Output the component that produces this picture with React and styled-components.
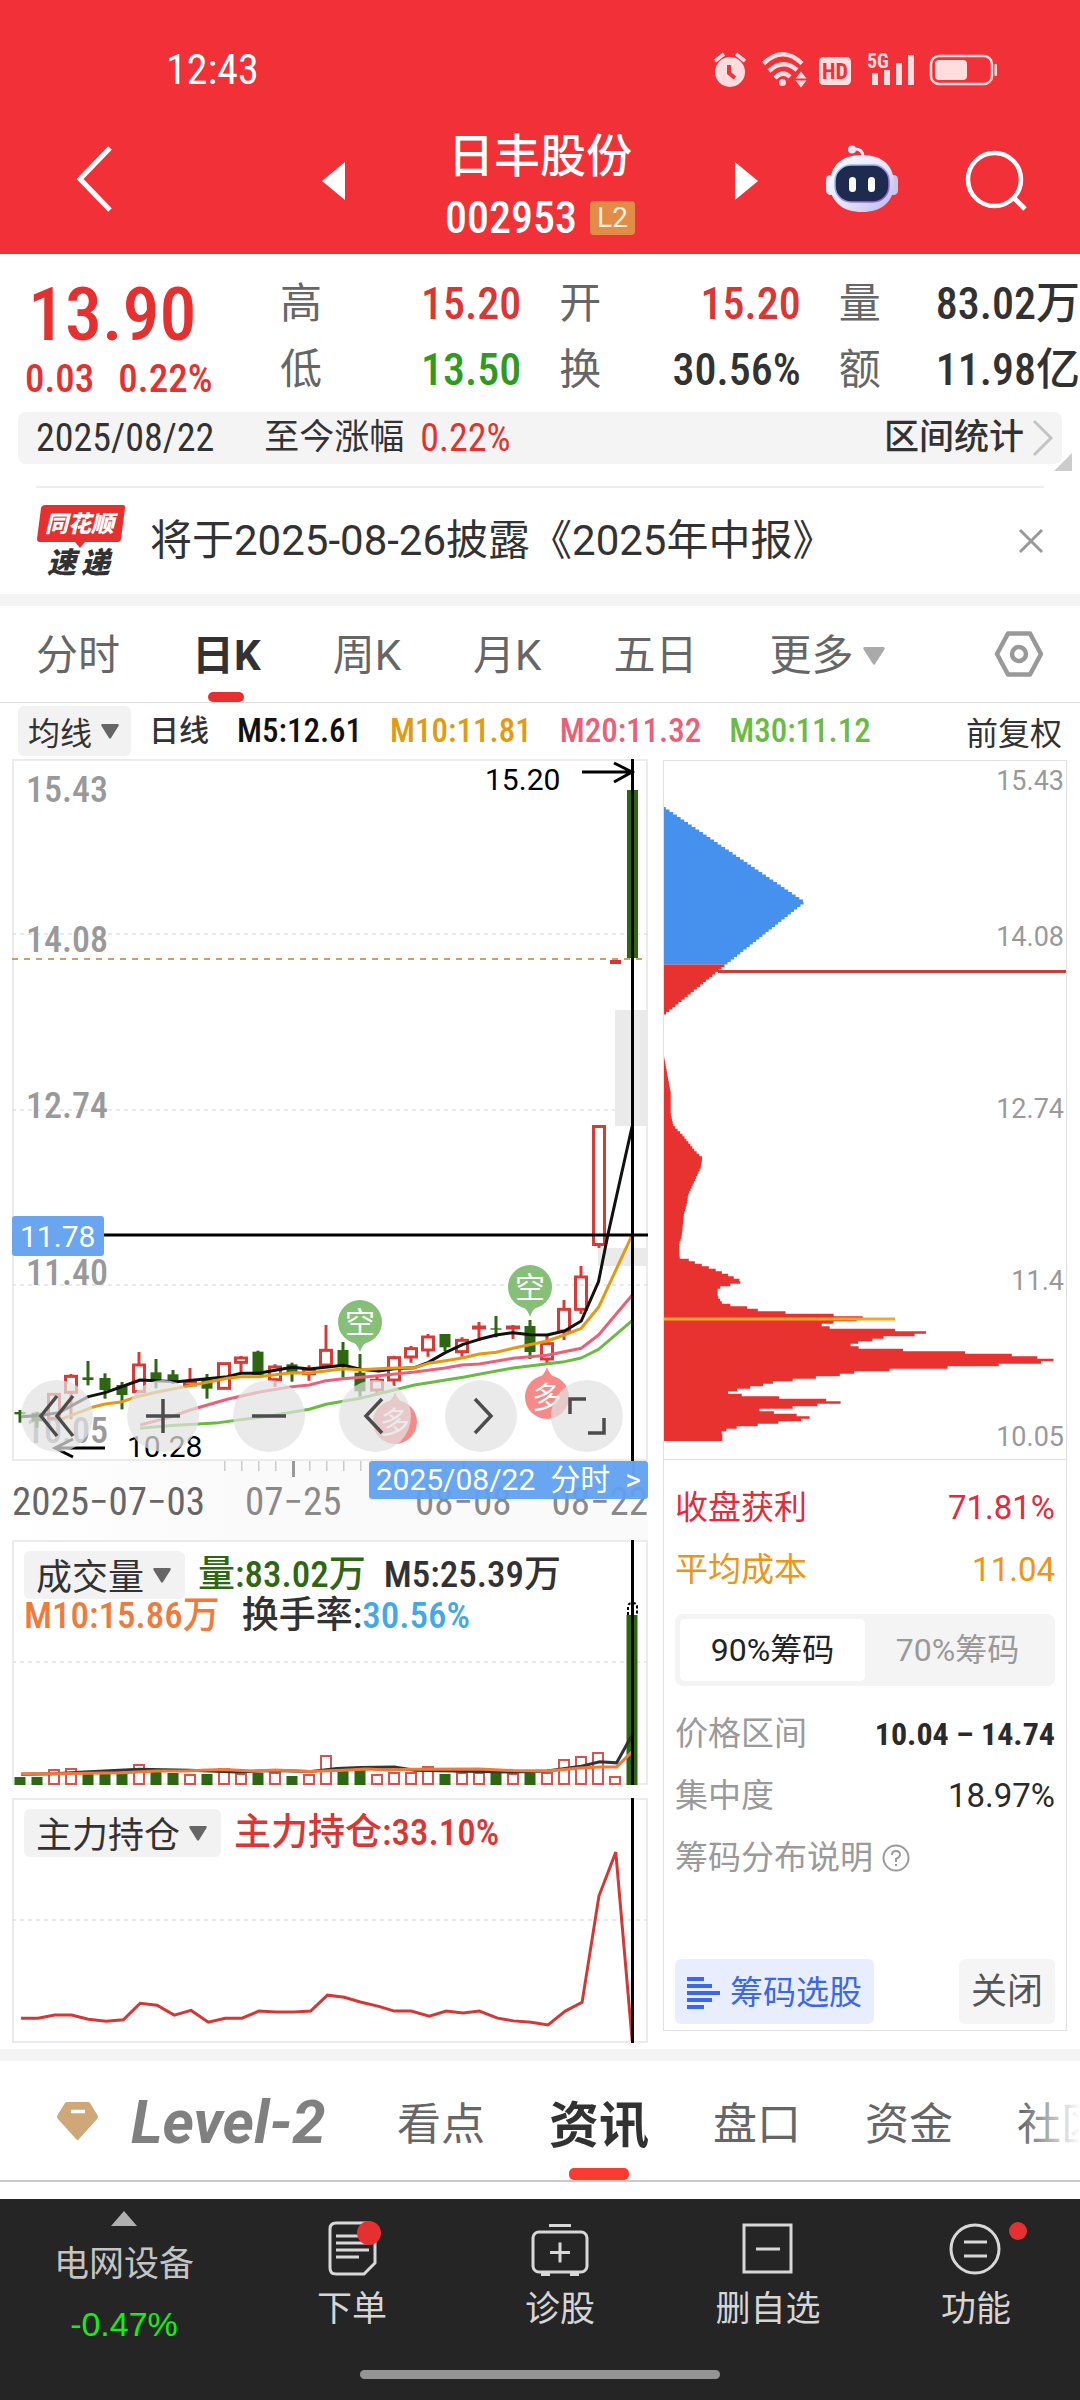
import React from "react";
import styled, { createGlobalStyle } from "styled-components";

const CJK = '"Noto Sans CJK SC", sans-serif';
const NARROW = `"Roboto Condensed", "Liberation Sans Narrow", Roboto, ${CJK}`;
const RED = "#e63030";
const GREEN = "#2f6613";

const Global = createGlobalStyle`
  * { box-sizing: border-box; }
  body { margin: 0; background: #fff; font-family: Roboto, ${CJK}; color: #323232; }
  button, select { font-family: inherit; border: 0; background: none; padding: 0; margin: 0; color: inherit; white-space: nowrap; }
  a { color: inherit; text-decoration: none; }
  svg { display: block; flex: none; overflow: visible; }
`;

const Page = styled.div`
  width: 100%;
  overflow: hidden;
`;

/* ---------- header ---------- */
const Header = styled.header`
  background: #f23038;
  color: #fff;
  padding-bottom: 8px;
`;
const StatusBar = styled.div`
  display: flex;
  align-items: center;
  justify-content: space-between;
  padding: 44px 82px 0 166px;
  font-family: ${NARROW};
  font-size: 42px;
  line-height: 52px;
`;
const StatusIcons = styled.div`
  display: flex;
  align-items: center;
`;
const TitleBar = styled.div`
  display: grid;
  grid-template-columns: minmax(0, 1fr) 390px minmax(0, 1fr);
  align-items: center;
  padding-top: 20px;
`;
const TitleSide = styled.div`
  display: flex;
  align-items: center;
  justify-content: space-between;
  padding-left: ${(p) => p.$left || 0}px;
  padding-right: ${(p) => p.$right || 0}px;
`;
const IconButton = styled.button`
  display: block;
`;
const TitleBlock = styled.div`
  display: flex;
  flex-direction: column;
  align-items: center;
  gap: 4px;
  padding-top: 10px;
`;
const StockName = styled.h1`
  margin: 0;
  font-size: 46px;
  line-height: 60px;
  font-weight: 500;
`;
const CodeLine = styled.div`
  display: flex;
  align-items: center;
  gap: 13px;
  font-family: ${NARROW};
  font-size: 44px;
  line-height: 56px;
  font-weight: 500;
`;
const Badge = styled.span`
  background: #e28c48;
  border-radius: 4px;
  color: #fff3df;
  font-family: Roboto, sans-serif;
  font-size: 28px;
  line-height: 34px;
  font-weight: 400;
  padding: 0 7px;
`;

/* ---------- quote ---------- */
const Quote = styled.section`
  display: flex;
  padding: 17px 0 9px;
`;
const PriceBox = styled.div`
  width: 280px;
  padding-left: 25px;
  color: ${RED};
  font-family: ${NARROW};
`;
const Price = styled.div`
  padding-left: 3px;
  font-size: 74px;
  line-height: 88px;
  font-weight: 500;
`;
const Change = styled.div`
  display: flex;
  gap: 24px;
  font-size: 39px;
  line-height: 40px;
  font-weight: 500;
`;
const Stats = styled.dl`
  flex: 1;
  margin: 0;
  display: grid;
  grid-template-columns: repeat(3, 1fr);
  grid-auto-rows: 66px;
  column-gap: 38px;
`;
const Stat = styled.div`
  display: flex;
  justify-content: space-between;
  line-height: 66px;
  dt { color: #666; font-size: 42px; }
  dd { margin: 0; font-family: ${NARROW}; font-size: 44px; font-weight: 500; white-space: nowrap; color: ${(p) => p.$color || "#323232"}; }
`;
const RangeBar = styled.div`
  position: relative;
  display: flex;
  align-items: center;
  margin: 0 18px 22px;
  padding: 0 9px 0 18px;
  background: #f4f4f4;
  border-radius: 8px;
  font-size: 35px;
  line-height: 52px;
`;
const RangeDate = styled.time`
  margin-right: 50px;
  font-family: ${NARROW};
  font-size: 38px;
`;
const RangeValue = styled.span`
  color: ${RED};
  font-family: ${NARROW};
  font-size: 38px;
  margin-left: 16px;
`;
const RangeLink = styled.button`
  display: flex;
  align-items: center;
  gap: 9px;
  margin-left: auto;
  font-size: 35px;
  line-height: 52px;
  font-weight: 500;
`;
const Corner = styled.i`
  position: absolute;
  right: -10px;
  bottom: -7px;
  border-left: 18px solid transparent;
  border-bottom: 18px solid #ccc;
`;
const News = styled.div`
  display: flex;
  align-items: center;
  margin: 0 36px;
  border-top: 2px solid #ededed;
  height: 108px;
  a { margin-left: 24px; flex: 1; font-size: 42px; line-height: 60px; white-space: nowrap; }
`;
const Band = styled.div`
  height: 12px;
  background: #f4f4f4;
`;

/* ---------- period tabs ---------- */
const PeriodTabs = styled.nav`
  display: flex;
  align-items: stretch;
  gap: 72px;
  padding: 0 36px;
  height: 97px;
  border-bottom: 1px solid #dedede;
`;
const PeriodTab = styled.button`
  position: relative;
  display: flex;
  align-items: center;
  gap: 10px;
  padding-top: 3px;
  font-size: 42px;
  line-height: 60px;
  color: ${(p) => (p.$active ? "#323232" : "#666")};
  font-weight: ${(p) => (p.$active ? 700 : 400)};
  &:last-child { margin-left: auto; padding-top: 0; }
`;
const Underline = styled.i`
  position: absolute;
  left: 50%;
  bottom: 0;
  width: ${(p) => p.$w}px;
  height: ${(p) => p.$h}px;
  margin-left: ${(p) => -p.$w / 2}px;
  border-radius: 5px;
  background: ${(p) => p.$color};
`;
const AverageRow = styled.div`
  display: flex;
  align-items: center;
  gap: 18px;
  padding: 3px 18px;
  font-size: 32px;
  line-height: 50px;
  font-weight: 500;
`;
const Average = styled.span`
  color: ${(p) => p.$color};
  margin-right: 10px;
  font-family: ${NARROW};
  font-size: ${(p) => p.$size || 33}px;
  white-space: nowrap;
`;
const Adjust = styled.button`
  margin-left: auto;
  font-size: 32px;
`;
const DropBox = styled.label`
  position: relative;
  display: flex;
  align-items: center;
  background: #f2f2f2;
  border-radius: 6px;
  svg { position: absolute; right: ${(p) => p.$pad}px; pointer-events: none; }
  select {
    appearance: none;
    font-size: ${(p) => p.$size}px;
    line-height: ${(p) => p.$h}px;
    height: ${(p) => p.$h}px;
    padding: 3px ${(p) => p.$pad + 26}px 0 ${(p) => p.$pad - 2}px;
    font-weight: 400;
  }
`;

/* ---------- charts ---------- */
const Charts = styled.section`
  display: grid;
  grid-template-columns: 636fr 404fr;
  column-gap: 15px;
  align-items: start;
  padding: 0 13px 6px 12px;
`;
const Column = styled.div`
  min-width: 0;
`;
const KPanel = styled.div`
  position: relative;
  > svg { width: 100%; height: auto; }
`;
const Tools = styled.div`
  position: absolute;
  left: 9px;
  right: 25px;
  bottom: 9px;
  display: flex;
  justify-content: space-between;
`;
const Tool = styled.button`
  width: 72px;
  height: 72px;
  border-radius: 50%;
  background: rgba(226, 226, 226, 0.72);
  display: flex;
  align-items: center;
  justify-content: center;
`;
const Axis = styled.div`
  position: relative;
  height: 79px;
  background: linear-gradient(90deg, #fff, #fafafa 35%);
`;
const AxisTicks = styled.svg`
  width: 100%;
  height: auto;
`;
const AxisDates = styled.div`
  display: grid;
  grid-template-columns: 233fr 170fr 133fr 100fr;
  padding-top: 5px;
  font-family: ${NARROW};
  font-size: 39px;
  line-height: 36px;
  color: #8a8a8a;
  white-space: nowrap;
  time:first-child { color: #666; }
  time:last-child { text-align: right; }
`;
const DateTag = styled.button`
  position: absolute;
  top: 0;
  right: 0;
  display: flex;
  gap: 15px;
  padding: 0 7px;
  background: rgba(96, 160, 240, 0.94);
  border-radius: 3px;
  color: #fff;
  font-size: 30px;
  line-height: 38px;
`;
const SubPanel = styled.div`
  position: relative;
  margin-bottom: 13px;
  &:last-child { margin-bottom: 0; }
  > svg { width: 100%; height: auto; }
`;
const Legend = styled.div`
  position: absolute;
  top: 11px;
  left: 12px;
  right: 12px;
`;
const LegendRow = styled.div`
  display: flex;
  align-items: center;
  gap: ${(p) => p.$gap}px;
  font-family: ${NARROW};
  font-size: 37px;
  line-height: ${(p) => p.$h}px;
  font-weight: 500;
  white-space: nowrap;
`;
const LegendGroup = styled.span`
  display: flex;
  gap: 18px;
`;
const Tint = styled.span`
  color: ${(p) => p.$color};
`;

/* ---------- chip distribution ---------- */
const ChipPanel = styled.aside`
  margin-top: 1px;
  border: 1px solid #e0e0e0;
  > svg { width: 100%; height: auto; }
`;
const ChipBody = styled.div`
  border-top: 1px solid #e0e0e0;
  padding: 17px 11px 6px;
`;
const ChipRow = styled.div`
  display: flex;
  justify-content: space-between;
  align-items: center;
  font-size: 33px;
  line-height: 62px;
  white-space: nowrap;
  color: ${(p) => p.$color || "#2a2a2a"};
  span:first-child { color: ${(p) => p.$color || "#9a9a9a"}; }
`;
const Range = styled.b`
  font-family: ${NARROW};
  font-weight: 700;
  font-size: 32px;
`;
const Segment = styled.div`
  display: grid;
  grid-template-columns: 1fr 1fr;
  margin: 13px 0 17px;
  padding: 5px;
  background: #f4f4f4;
  border-radius: 8px;
`;
const SegmentButton = styled.button`
  border-radius: 5px;
  font-size: 32px;
  line-height: 62px;
  background: ${(p) => (p.$on ? "#fff" : "transparent")};
  color: ${(p) => (p.$on ? "#222" : "#999")};
`;
const HelpButton = styled.button`
  display: flex;
  align-items: center;
  gap: 9px;
  color: #9a9a9a;
  font-size: 33px;
  line-height: 62px;
`;
const ChipActions = styled.div`
  display: flex;
  justify-content: space-between;
  margin-top: 70px;
`;
const ActionButton = styled.button`
  display: flex;
  align-items: center;
  gap: 10px;
  padding: 2px 12px 0;
  border-radius: 6px;
  line-height: 63px;
  font-size: ${(p) => p.$size}px;
  background: ${(p) => p.$bg};
  color: ${(p) => p.$color};
`;

/* ---------- bottom ---------- */
const InfoTabs = styled.nav`
  position: relative;
  display: flex;
  gap: 64px;
  height: 121px;
  padding-left: 57px;
  margin-bottom: 17px;
  border-bottom: 2px solid #cacaca;
  overflow: hidden;
  &::after {
    content: "";
    position: absolute;
    right: 0; top: 0; bottom: 0;
    width: 60px;
    background: linear-gradient(90deg, rgba(255,255,255,0), #fff);
  }
`;
const InfoTab = styled.button`
  position: relative;
  flex: none;
  display: flex;
  align-items: center;
  gap: 33px;
  font-size: ${(p) => (p.$active ? 50 : 44)}px;
  font-weight: ${(p) => (p.$active ? 700 : 400)};
  color: ${(p) => (p.$active ? "#323232" : "#666")};
`;
const LevelMark = styled.span`
  min-width: 202px;
  padding-top: 4px;
  text-align: left;
  font-family: Roboto, sans-serif;
  font-size: 60px;
  font-weight: 700;
  font-style: italic;
  color: #808080;
`;
const BottomNav = styled.nav`
  background: #252525;
  color: #d6d6d6;
`;
const NavItems = styled.div`
  display: grid;
  grid-template-columns: 248fr repeat(4, 208fr);
`;
const NavItem = styled.a`
  display: flex;
  flex-direction: column;
  align-items: center;
  padding-top: 20px;
  font-size: 35px;
  line-height: 52px;
  svg { margin-bottom: 5px; }
`;
const IndexItem = styled(NavItem)`
  padding-top: 12px;
  color: #c4c4c4;
  svg { margin-bottom: 13px; }
`;
const IndexChange = styled.span`
  margin-top: 7px;
  font-size: 34px;
  line-height: 52px;
  font-family: "Liberation Sans", sans-serif;
  color: #14f014;
`;
const HomeBar = styled.div`
  width: 360px;
  height: 9px;
  border-radius: 5px;
  background: #949494;
  margin: 20px auto 0;
`;
const NavFoot = styled.div`
  height: 21px;
`;

/* ---------- small drawings ---------- */
const Caret = ({ color = "#666", w = 18, h = 15 }) => (
  <svg width={w} height={h} viewBox="0 0 18 15" preserveAspectRatio="none" aria-hidden="true">
    <path d="M1 0H17Q18.500 .5 17.500 2L10 14Q9 15.500 8 14L.5 2Q-.5 .5 1 0Z" fill={color} />
  </svg>
);

const Dropdown = ({ label, value, size, h, pad }) => (
  <DropBox $size={size} $h={h} $pad={pad}>
    <select aria-label={label} defaultValue={value}>
      <option>{value}</option>
    </select>
    <Caret />
  </DropBox>
);

const StatusGlyphs = () => (
  <svg width="286" height="38" viewBox="712 50 286 38" fill="#ffdcdd" aria-hidden="true">
    <circle cx="730" cy="71" r="15" />
    <path d="M715 60l9-7M745 60l-9-7" stroke="#ffdcdd" strokeWidth="3.500" />
    <path d="M729 64v8l6 5" stroke="#f23038" strokeWidth="4" fill="none" />
    <g fill="none" stroke="#ffdcdd" strokeWidth="4.500">
      <path d="M763.500 62.500Q783 44 802 62.500" />
      <path d="M769 70Q783 57 797 69" />
      <path d="M775 77Q783 69 790 76" />
    </g>
    <circle cx="782.500" cy="81.500" r="3.500" />
    <path d="M795.500 77.500h11l-5.500-7zM795.500 79.500h11l-5.500 7z" />
    <rect x="819" y="56" width="32" height="28" rx="4.500" />
    <text x="835" y="78" textAnchor="middle" fontFamily="Roboto Condensed, Roboto" fontSize="22" fontWeight="700" fill="#f23038">HD</text>
    <text x="867" y="67" fontFamily="Roboto Condensed, Roboto" fontSize="20" fontWeight="700">5G</text>
    <path d="M872 72h6v12h-6zM884 69h6v15h-6zM896 62h6v22h-6zM908 54h6v30h-6z" />
    <rect x="931" y="55" width="61" height="28" rx="8" fill="none" stroke="#ffdcdd" strokeWidth="2.500" />
    <rect x="935" y="59" width="32" height="20" rx="4" />
    <rect x="994.500" y="63" width="2.500" height="12" rx="1" />
  </svg>
);

const Robot = () => (
  <svg width="74" height="72" viewBox="0 0 74 72" aria-hidden="true">
    <defs>
      <linearGradient id="shell" x1="0" y1="0" x2="1" y2="1">
        <stop offset="0" stopColor="#fff" />
        <stop offset=".55" stopColor="#e6e4f8" />
        <stop offset="1" stopColor="#b9b5ea" />
      </linearGradient>
      <linearGradient id="rim" x1="0" y1="0" x2="1" y2="1">
        <stop offset="0" stopColor="#8fdcf0" />
        <stop offset="1" stopColor="#9a4be6" />
      </linearGradient>
    </defs>
    <path d="M28 4Q38 3 38 12" fill="none" stroke="#f0effb" strokeWidth="3" />
    <circle cx="27" cy="4.500" r="4" fill="#e8e6fa" />
    <rect x="1" y="30" width="9" height="20" rx="4.500" fill="#eeecfc" />
    <rect x="64" y="30" width="9" height="20" rx="4.500" fill="#c9c6f0" />
    <path d="M37 10C58 10 69 21 69 39C69 57 56 67 37 67S5 57 5 39C5 21 16 10 37 10Z" fill="url(#shell)" />
    <rect x="10" y="20" width="54" height="37" rx="16" fill="#1f2a4f" stroke="url(#rim)" strokeWidth="1.500" />
    <rect x="24" y="32" width="7" height="15" rx="3.500" fill="#fff" />
    <rect x="43" y="32" width="7" height="15" rx="3.500" fill="#fff" />
  </svg>
);

const NewsMark = () => (
  <svg width="90" height="76" viewBox="36 502 90 76" role="img" aria-label="同花顺速递">
    <path d="M45 504H123Q125.500 504 125 507L121 538Q120.500 541 118 541H85L80 547L75 541H40Q37 541 37 538L41 507Q42 504 45 504Z" fill={RED} />
    <g fontFamily="Noto Sans CJK SC" fontWeight="900" fontStyle="italic">
      <text x="45" y="531" fontSize="23" fill="#fff">同花顺</text>
      <text x="47" y="572" fontSize="29" fill="#323232">速</text>
      <text x="81" y="572" fontSize="29" fill="#323232">递</text>
    </g>
  </svg>
);

/* ---------- K line chart ---------- */
const slot = (i) => 20 + 17 * i;

// [up, bodyTop, bodyBottom, high, low], one entry per trading day, in thirds of a pixel below the plot's mid line
const DAYS = [
  [0, 846, 853, 840, 878], [0, 848, 874, 845, 893], [1, 790, 868, 790, 868], [1, 736, 790, 732, 868],
  [0, 742, 750, 693, 766], [0, 744, 780, 730, 806], [0, 765, 795, 756, 838], [1, 702, 788, 666, 788],
  [0, 727, 750, 687, 775], [0, 733, 753, 720, 762], [1, 752, 768, 714, 768], [0, 750, 776, 732, 806],
  [1, 698, 778, 698, 778], [1, 681, 700, 678, 727], [0, 665, 735, 662, 735], [1, 708, 752, 703, 770],
  [0, 703, 728, 698, 755], [1, 716, 734, 706, 752], [1, 658, 708, 585, 708], [0, 660, 706, 636, 743],
  [0, 728, 784, 672, 800], [1, 748, 783, 735, 790], [1, 680, 753, 677, 768], [1, 653, 684, 648, 698],
  [1, 618, 663, 612, 680], [0, 612, 652, 612, 663], [1, 628, 668, 622, 680], [1, 588, 593, 576, 633],
  [0, 595, 599, 558, 622], [1, 588, 595, 585, 627], [0, 588, 666, 570, 687], [1, 638, 690, 618, 703],
  [1, 535, 606, 510, 630], [1, 438, 541, 408, 552],
];
const LINES = [
  ["#6abb43", "333,895 400,887 520,878 640,858 735,838 775,823 856,805 985,765 1100,742 1219,714 1341,695 1381,684 1422,658 1502,572"],
  ["#ea6078", "333,885 400,863 452,840 540,808 614,787 694,770 735,765 775,752 816,746 900,737 985,726 1058,714 1098,705 1139,702 1219,685 1300,676 1381,655 1422,615 1502,495"],
  ["#111", "50,860 100,856 140,848 210,800 250,788 333,750 420,755 540,740 573,730 614,730 694,712 735,717 816,706 856,718 900,723 937,716 985,713 1018,697 1058,668 1100,643 1139,628 1179,615 1219,608 1260,614 1300,615 1341,603 1381,573 1422,455 1445,310 1502,-12"],
  ["#e39a10", "145,868 219,832 250,822 291,815 320,802 371,787 440,770 540,745 573,740 614,740 694,728 735,729 816,716 856,719 920,715 985,713 1018,700 1058,692 1098,684 1139,672 1179,667 1219,655 1300,633 1341,615 1381,595 1422,532 1502,315"],
];
const PRICES = [["15.43", 802], ["14.08", 952], ["12.74", 1118], ["11.40", 1285], ["10.05", 1443]];

const Candle = ({ x, day: [up, top, bottom, high, low] }) => {
  const y = (v) => 1130 + v / 3;
  if (up)
    return (
      <g stroke="#d83a38" strokeWidth="3" fill="none">
        <path d={`M${x} ${y(high)}V${y(top)}M${x} ${y(bottom)}V${y(low)}`} />
        <rect x={x - 5.5} y={y(top) + 1} width="11" height={Math.max(1, (bottom - top) / 3 - 2)} />
      </g>
    );
  return (
    <g fill={GREEN}>
      <rect x={x - 1.5} y={y(high)} width="3" height={(low - high) / 3} />
      <rect x={x - 5.5} y={y(top)} width="11" height={(bottom - top) / 3} />
    </g>
  );
};

const Balloon = ({ x, y, up, children }) => (
  <g>
    <path
      d={up ? `M${x - 12} ${y - 16}Q${x - 2} ${y - 22} ${x} ${y - 30}Q${x + 2} ${y - 22} ${x + 12} ${y - 16}Z` : `M${x - 12} ${y + 16}Q${x - 2} ${y + 22} ${x} ${y + 30}Q${x + 2} ${y + 22} ${x + 12} ${y + 16}Z`}
      fill={up ? "#f58a88" : "#86bf77"}
    />
    <circle cx={x} cy={y} r="22" fill={up ? "#f58a88" : "#86bf77"} />
    <text x={x} y={y + 11} textAnchor="middle" fontSize="30" fill="#fff" fontFamily="Noto Sans CJK SC">{children}</text>
  </g>
);

const KChart = () => (
  <svg viewBox="12 759 636 702" fontFamily="Roboto" role="img" aria-label="日K线">
    <rect x="13" y="760" width="634" height="700" fill="#fff" stroke="#ebebeb" strokeWidth="2" />
    <path d="M12 934H648M12 1110H648M12 1285H648" stroke="#e2e2e2" strokeWidth="1.500" strokeDasharray="4 4" />
    <path d="M12 959H642" stroke="#c5a46d" strokeWidth="2" strokeDasharray="6 6" />
    <path d="M615 1010H648V1126H615ZM598 1248H648V1266H598Z" fill="#eaeaea" />
    {PRICES.map(([t, y]) => (
      <text key={t} x="26" y={y} fontFamily="Roboto Condensed, Roboto" fontSize="36" fontWeight="500" fill="#999">{t}</text>
    ))}
    {DAYS.map((d, i) => <Candle key={i} x={slot(i)} day={d} />)}
    <path d="M593.500 1126.500h11v118h-11zM599 1245v3" fill="none" stroke="#d83a38" strokeWidth="3" />
    <path d="M610 960h11v4h-11z" fill={RED} />
    <path d="M627 790h11v168h-11z" fill={GREEN} />
    <g transform="translate(0 1130) scale(.4209 .3333)" fill="none" strokeWidth="3" strokeLinejoin="round">
      {LINES.map(([c, p]) => <polyline key={c} points={p} stroke={c} vectorEffect="non-scaling-stroke" />)}
    </g>
    <Balloon x={360} y={1322}>空</Balloon>
    <Balloon x={530} y={1287}>空</Balloon>
    <Balloon x={395} y={1422} up>多</Balloon>
    <Balloon x={547} y={1397} up>多</Balloon>
    <text x="485" y="790" fontSize="30" fill="#000">15.20</text>
    <text x="127" y="1457" fontSize="30" fill="#000">10.28</text>
    <g fill="none" stroke="#000" strokeWidth="3">
      <path d="M582 772H632M614 763L632 772L614 782" />
      <path d="M105 1448H55M73 1439L55 1448L73 1457" />
      <path d="M632.500 759V1461M104 1235H648" />
    </g>
    <rect x="12" y="1216" width="92" height="40" rx="3" fill="#6aa5f0" />
    <text x="20" y="1247" fontSize="30" fill="#fff">11.78</text>
  </svg>
);

const TOOLS = [
  ["最早", "M16 -20L0 0L16 20M0 -20L-16 0L0 20"],
  ["放大", "M-17 0H17M0 -17V17"],
  ["缩小", "M-17 0H17"],
  ["左移", "M7 -17L-9 0L7 17"],
  ["右移", "M-6 -17L10 0L-6 17"],
  ["全屏", "M-17 -2V-17H-1M17 2V17H1"],
];

/* ---------- volume and position charts ---------- */
const VOLUMES = [
  [0, 8], [0, 8], [1, 15], [1, 16], [0, 11], [0, 11], [0, 11], [1, 20], [0, 13], [0, 12], [1, 10], [0, 11], [1, 16],
  [1, 11], [0, 12], [1, 12], [0, 9], [1, 10], [1, 29], [0, 18], [0, 15], [1, 10], [1, 12], [1, 12], [1, 18], [0, 11],
  [1, 12], [1, 12], [0, 12], [1, 11], [0, 12], [1, 12], [1, 25], [1, 28], [1, 32], [1, 8], [0, 170],
];
const VOLUME_LINES = [
  ["#333", "50,752 130,750 200,745 331,737 450,740 560,745 654,741 735,744 800,735 856,732 937,730 985,740 1139,744 1219,745 1300,742 1381,728 1425,715 1465,718 1502,635"],
  ["#f07a3c", "50,750 130,750 291,747 371,742 440,742 492,739 533,738 600,742 654,739 735,744 816,740 870,736 920,739 977,737 1139,736 1219,741 1300,742 1381,733 1425,730 1465,730 1502,685"],
];
const POSITION = "50,1473 90,1473 130,1464 170,1464 210,1476 252,1482 293,1478 333,1429 373,1435 414,1464 454,1450 495,1485 535,1473 575,1473 615,1452 655,1455 700,1455 738,1452 778,1405 818,1411 856,1425 900,1438 937,1452 977,1452 1020,1467 1060,1452 1100,1458 1139,1452 1182,1473 1220,1481 1262,1485 1302,1493 1343,1452 1383,1426 1423,1112 1463,982 1502,1540";

const VolumeChart = () => (
  <svg viewBox="12 1540 636 245" role="img" aria-label="成交量">
    <rect x="13" y="1541" width="634" height="243" fill="#fff" stroke="#ebebeb" strokeWidth="2" />
    <path d="M12 1662H648" stroke="#e8e8e8" strokeWidth="2" strokeDasharray="4 4" />
    {VOLUMES.map(([up, h], i) =>
      up ? (
        <rect key={i} x={slot(i) - 5} y={1785 - h} width="10" height={h - 1} fill="#fff" stroke="#d65350" strokeWidth="2" />
      ) : (
        <rect key={i} x={slot(i) - 5.5} y={1785 - h} width="11" height={h} fill={GREEN} />
      )
    )}
    <g transform="translate(0 1520) scale(.4209 .3382)" fill="none" strokeWidth="3">
      {VOLUME_LINES.map(([c, p]) => <polyline key={c} points={p} stroke={c} vectorEffect="non-scaling-stroke" />)}
    </g>
    <path d="M632.500 1540V1785" stroke="#000" strokeWidth="3" />
    <path d="M628 1615V1607Q628 1603 632.500 1603T637 1607V1615" fill="none" stroke="#000" strokeWidth="2" strokeDasharray="3 2" />
  </svg>
);

const PositionChart = () => (
  <svg viewBox="12 1798 636 245" role="img" aria-label="主力持仓">
    <rect x="13" y="1799" width="634" height="243" fill="#fff" stroke="#ebebeb" strokeWidth="2" />
    <path d="M12 1920H648" stroke="#e8e8e8" strokeWidth="2" strokeDasharray="4 4" />
    <g transform="translate(0 1520) scale(.4209 .3382)" fill="none">
      <polyline points={POSITION} stroke="#d23835" strokeWidth="3" vectorEffect="non-scaling-stroke" />
    </g>
    <path d="M632.500 1798V2043" stroke="#000" strokeWidth="3" />
  </svg>
);

/* ---------- chip distribution chart ---------- */
const PROFILE = [
  [42, 667], [62, 745], [62, 790], [70, 818], [97, 838], [135, 873], [157, 888], [152, 910], [115, 968], [110, 990],
  [102, 1010], [95, 1060], [88, 1075], [88, 1105], [108, 1108], [130, 1115], [192, 1131], [230, 1142], [280, 1158],
  [225, 1168], [203, 1172], [203, 1190], [215, 1203], [232, 1208], [285, 1212], [300, 1217], [346, 1222], [467, 1228],
  [638, 1233], [638, 1240], [570, 1245], [515, 1250], [515, 1257], [622, 1260], [804, 1265], [845, 1271], [743, 1277], [657, 1282],
  [674, 1287], [585, 1293], [615, 1298], [635, 1304], [820, 1308], [972, 1313], [1121, 1319], [1182, 1325], [1223, 1330],
  [1146, 1336], [997, 1341], [832, 1347], [657, 1352], [585, 1358], [560, 1363], [473, 1368], [417, 1373], [352, 1379],
  [333, 1385], [285, 1390], [247, 1396], [231, 1400], [278, 1405], [406, 1411], [540, 1416], [572, 1421], [495, 1427],
  [413, 1433], [316, 1438], [374, 1443], [438, 1448], [482, 1453], [455, 1459], [380, 1465], [312, 1471], [254, 1476],
  [213, 1484], [217, 1490], [217, 1505],
];
const UPPER = [[42, 124], [465, 331], [228, 467]];
const LOWER = [[228, 467], [42, 577]];

const stairs = (points) => {
  const px = points.map(([x, y]) => [650 + x / 3, 750 + y / 2.178]);
  const end = px[px.length - 1][1];
  let d = `M664 ${px[0][1]}`;
  let k = 0;
  for (let y = px[0][1]; y < end; y += 2.5) {
    while (k < px.length - 2 && px[k + 1][1] <= y + 1.2) k++;
    const [x0, y0] = px[k];
    const [x1, y1] = px[k + 1];
    const t = Math.min(1, Math.max(0, (y + 1.2 - y0) / (y1 - y0)));
    d += `H${(x0 + (x1 - x0) * t).toFixed(1)}V${Math.min(end, y + 2.5).toFixed(1)}`;
  }
  return d + "H664Z";
};

const CHIP_PRICES = [["15.43", 790], ["14.08", 946], ["12.74", 1118], ["11.4", 1290], ["10.05", 1446]];

const ChipChart = () => (
  <svg viewBox="664 761 402 698" fontFamily="Roboto" role="img" aria-label="筹码分布">
    <path d={stairs(UPPER)} fill="#4791ee" />
    <path d={stairs(LOWER)} fill="#e83230" />
    <path d={stairs(PROFILE)} fill="#e83230" />
    <path d="M718 971.500H1066" stroke="#cb3d3c" strokeWidth="3" />
    <path d="M664 1319H895" stroke="#f5a623" strokeWidth="3" />
    {CHIP_PRICES.map(([t, y]) => (
      <text key={t} x="1064" y={y} textAnchor="end" fontSize="27" fill="#999">{t}</text>
    ))}
  </svg>
);

/* ---------- nav icons ---------- */
const NavIcon = ({ children }) => (
  <svg width="100" height="60" viewBox="-50 -30 100 60" fill="none" stroke="#d8d8d8" strokeWidth="3" aria-hidden="true">
    {children}
  </svg>
);

const NAV = [
  ["下单", <>
    <path d="M-16 -26H16Q23 -26 23 -19V14L12 25H-16Q-22 25 -22 19V-20Q-22 -26 -16 -26Z" />
    <path d="M-16 -13H10M-16 -6H16M-16 1H17M-16 8H7" />
    <circle cx="17" cy="-16" r="12" fill={RED} stroke="none" />
  </>],
  ["诊股", <>
    <rect x="-27" y="-17" width="54" height="40" rx="6" />
    <path d="M-11 -23.500H11M-10 3.500H10M0 -6.500V13.500" />
    <path d="M-19 25H-10M10 25H19" strokeWidth="4" />
  </>],
  ["删自选", <path d="M-24 -24H23V23H-24ZM-12 0H12" />],
  ["功能", <>
    <circle cx="-1" cy="0" r="24" />
    <path d="M-12 -7H11M-12 7H11" />
    <circle cx="42" cy="-18" r="9" fill={RED} stroke="none" />
  </>],
];

const STATS = [
  ["高", "15.20", "#dd3434"], ["开", "15.20", "#dd3434"], ["量", "83.02万"],
  ["低", "13.50", "#2f9a20"], ["换", "30.56%"], ["额", "11.98亿"],
];

export default function App() {
  return (
    <Page>
      <Global />
      <Header>
        <StatusBar>
          <time>12:43</time>
          <StatusIcons><StatusGlyphs /></StatusIcons>
        </StatusBar>
        <TitleBar>
          <TitleSide $left={76}>
            <IconButton aria-label="返回">
              <svg width="38" height="70" viewBox="0 0 38 70"><path d="M34 2L4 33L34 64" fill="none" stroke="#fff" strokeWidth="5" /></svg>
            </IconButton>
            <IconButton aria-label="上一只">
              <svg width="23" height="38" viewBox="0 0 23 38"><path d="M23 0V38L0 19Z" fill="#fff" /></svg>
            </IconButton>
          </TitleSide>
          <TitleBlock>
            <StockName>日丰股份</StockName>
            <CodeLine>002953<Badge>L2</Badge></CodeLine>
          </TitleBlock>
          <TitleSide $right={54}>
            <IconButton aria-label="下一只">
              <svg width="23" height="38" viewBox="0 0 23 38"><path d="M0 0V38L23 19Z" fill="#fff" /></svg>
            </IconButton>
            <IconButton aria-label="智能助手"><Robot /></IconButton>
            <IconButton aria-label="搜索">
              <svg width="60" height="70" viewBox="0 0 60 70"><path d="M48 52L59 63" stroke="#fff" strokeWidth="5" /><circle cx="28.500" cy="33.500" r="26.500" fill="none" stroke="#fff" strokeWidth="4.500" /></svg>
            </IconButton>
          </TitleSide>
        </TitleBar>
      </Header>

      <Quote>
        <PriceBox>
          <Price>13.90</Price>
          <Change><span>0.03</span><span>0.22%</span></Change>
        </PriceBox>
        <Stats>
          {STATS.map(([k, v, c]) => (
            <Stat key={k} $color={c}><dt>{k}</dt><dd>{v}</dd></Stat>
          ))}
        </Stats>
      </Quote>

      <RangeBar>
        <RangeDate>2025/08/22</RangeDate>
        <span>至今涨幅</span>
        <RangeValue>0.22%</RangeValue>
        <RangeLink>
          区间统计
          <svg width="20" height="36" viewBox="0 0 20 36"><path d="M1 1L18 18L1 35" fill="none" stroke="#c4c4c4" strokeWidth="3" /></svg>
        </RangeLink>
        <Corner />
      </RangeBar>

      <News>
        <NewsMark />
        <a href="#report">将于2025-08-26披露《2025年中报》</a>
        <IconButton aria-label="关闭公告">
          <svg width="26" height="26" viewBox="0 0 26 26"><path d="M2 2L24 24M24 2L2 24" stroke="#999" strokeWidth="3" /></svg>
        </IconButton>
      </News>
      <Band />

      <PeriodTabs>
        <PeriodTab>分时</PeriodTab>
        <PeriodTab $active>日K<Underline $w={36} $h={10} $color={RED} /></PeriodTab>
        <PeriodTab>周K</PeriodTab>
        <PeriodTab>月K</PeriodTab>
        <PeriodTab>五日</PeriodTab>
        <PeriodTab>更多<Caret color="#aaa" w={22} h={18} /></PeriodTab>
        <PeriodTab aria-label="设置">
          <svg width="50" height="48" viewBox="0 0 50 48" fill="none" stroke="#999" strokeWidth="4.500" strokeLinejoin="round">
            <path d="M14 3.500H36L47 24L36 44.500H14L3 24Z" />
            <circle cx="25" cy="24" r="7" />
          </svg>
        </PeriodTab>
      </PeriodTabs>

      <AverageRow>
        <Dropdown label="指标" value="均线" size={32} h={50} pad={12} />
        <Average $color="#323232" $size={30}>日线</Average>
        <Average $color="#111">M5:12.61</Average>
        <Average $color="#e39a10">M10:11.81</Average>
        <Average $color="#ea6078">M20:11.32</Average>
        <Average $color="#6abb43">M30:11.12</Average>
        <Adjust>前复权</Adjust>
      </AverageRow>

      <Charts>
        <Column>
          <KPanel>
            <KChart />
            <Tools>
              {TOOLS.map(([name, d]) => (
                <Tool key={name} aria-label={name}>
                  <svg width="48" height="48" viewBox="-24 -24 48 48"><path d={d} fill="none" stroke="#4c4c4c" strokeWidth="3.500" /></svg>
                </Tool>
              ))}
            </Tools>
          </KPanel>
          <Axis>
            <AxisTicks viewBox="12 1461 636 18">
              {Array.from({ length: 25 }, (_, i) => (
                <rect key={i} x={224 + 17 * i} y="1461" width={i % 10 === 4 ? 3 : 1.5} height={i % 10 === 4 ? 16 : 10} fill={i % 10 === 4 ? "#999" : "#ccc"} />
              ))}
            </AxisTicks>
            <AxisDates>
              <time>2025−07−03</time><time>07−25</time><time>08−08</time><time>08−22</time>
            </AxisDates>
            <DateTag><span>2025/08/22</span><span>分时</span><span>&gt;</span></DateTag>
          </Axis>
          <SubPanel>
            <VolumeChart />
            <Legend>
              <LegendRow $h={48} $gap={13}>
                <Dropdown label="副图一" value="成交量" size={36} h={48} pad={14} />
                <LegendGroup>
                  <Tint $color={GREEN}>量:83.02万</Tint>
                  <Tint $color="#323232">M5:25.39万</Tint>
                </LegendGroup>
              </LegendRow>
              <LegendRow $h={34} $gap={22}>
                <Tint $color="#f07a3c">M10:15.86万</Tint>
                <span>换手率:<Tint $color="#42a8e8">30.56%</Tint></span>
              </LegendRow>
            </Legend>
          </SubPanel>
          <SubPanel>
            <PositionChart />
            <Legend>
              <LegendRow $h={48} $gap={13}>
                <Dropdown label="副图二" value="主力持仓" size={36} h={48} pad={14} />
                <Tint $color="#dd3434">主力持仓:33.10%</Tint>
              </LegendRow>
            </Legend>
          </SubPanel>
        </Column>

        <ChipPanel>
          <ChipChart />
          <ChipBody>
            <ChipRow $color="#e6293b"><span>收盘获利</span><span>71.81%</span></ChipRow>
            <ChipRow $color="#ef9414"><span>平均成本</span><span>11.04</span></ChipRow>
            <Segment>
              <SegmentButton $on>90%筹码</SegmentButton>
              <SegmentButton>70%筹码</SegmentButton>
            </Segment>
            <ChipRow><span>价格区间</span><Range>10.04 – 14.74</Range></ChipRow>
            <ChipRow><span>集中度</span><span>18.97%</span></ChipRow>
            <HelpButton>
              筹码分布说明
              <svg width="28" height="28" viewBox="0 0 28 28" fill="none" stroke="#9a9a9a" strokeWidth="2">
                <circle cx="14" cy="14" r="12.500" />
                <path d="M10 11Q10 7 14 7T18 11Q18 13 14 15V18M14 20V22" />
              </svg>
            </HelpButton>
            <ChipActions>
              <ActionButton $bg="#e9eefe" $color="#3a68e8" $size={33}>
                <svg width="33" height="34" viewBox="0 0 33 34" fill="#3a68e8">
                  <path d="M0 1h17v4H0zM0 8h25v4H0zM0 15h33v4H0zM0 22h25v4H0zM0 29h17v4H0z" />
                </svg>
                筹码选股
              </ActionButton>
              <ActionButton $bg="#f5f5f5" $color="#555" $size={36}>关闭</ActionButton>
            </ChipActions>
          </ChipBody>
        </ChipPanel>
      </Charts>
      <Band />

      <InfoTabs>
        <InfoTab>
          <svg width="41" height="38" viewBox="0 0 41 38">
            <path d="M8 1Q9 0 10 0H31Q32 0 33 1L41 14Q41 16 40 17L22 37Q20.500 39 19 37L1 17Q0 16 0 14Z" fill="#d0a877" />
            <path d="M14 9.500H28" stroke="#fff" strokeWidth="3.500" />
          </svg>
          <LevelMark>Level-2</LevelMark>
        </InfoTab>
        <InfoTab>看点</InfoTab>
        <InfoTab $active>资讯<Underline $w={60} $h={12} $color="#fb3a31" /></InfoTab>
        <InfoTab>盘口</InfoTab>
        <InfoTab>资金</InfoTab>
        <InfoTab>社区</InfoTab>
      </InfoTabs>

      <BottomNav>
        <NavItems>
          <IndexItem href="#index">
            <svg width="26" height="15" viewBox="0 0 26 15"><path d="M13 0L26 15H0Z" fill="#b0b0b0" /></svg>
            <span>电网设备</span>
            <IndexChange>-0.47%</IndexChange>
          </IndexItem>
          {NAV.map(([name, icon]) => (
            <NavItem key={name} href="#">
              <NavIcon>{icon}</NavIcon>
              <span>{name}</span>
            </NavItem>
          ))}
        </NavItems>
        <HomeBar />
        <NavFoot />
      </BottomNav>
    </Page>
  );
}
